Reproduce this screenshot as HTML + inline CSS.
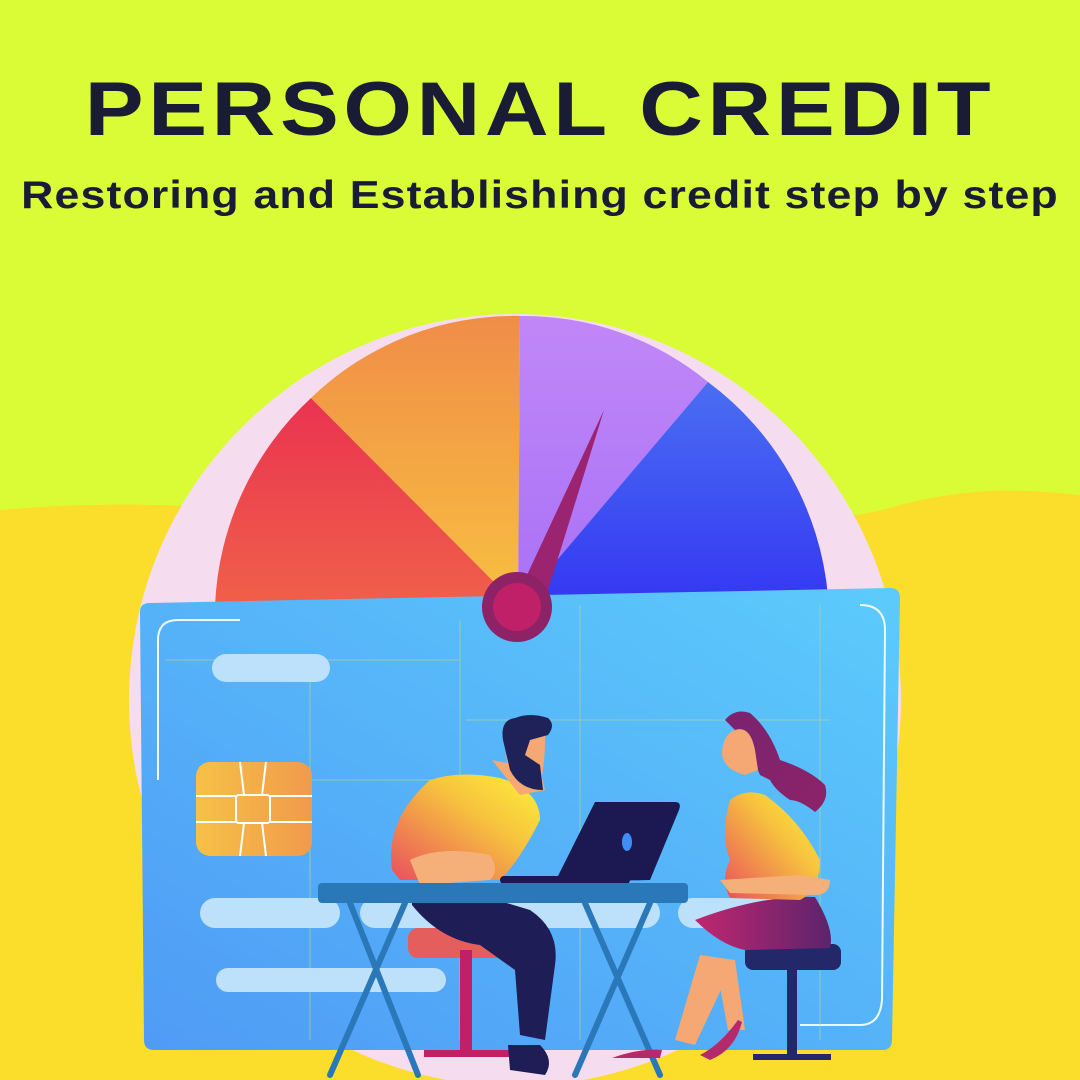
<!DOCTYPE html>
<html><head><meta charset="utf-8"><style>
html,body{margin:0;padding:0}
body{width:1080px;height:1080px;overflow:hidden;background:#dafc36;position:relative;font-family:"Liberation Sans",sans-serif}
.t{position:absolute;left:0;width:1080px;text-align:center;color:#1a1b34;font-weight:900;white-space:nowrap}
.t1{top:66px;font-size:76px;letter-spacing:4px;transform:scaleX(1.16)}
.t2{top:174px;font-size:39px;letter-spacing:1px;transform:scaleX(1.145)}
svg{position:absolute;left:0;top:0}
</style></head><body>
<svg width="1080" height="1080" viewBox="0 0 1080 1080">
<defs>
<linearGradient id="red" x1="0" y1="0" x2="0" y2="1"><stop offset="0" stop-color="#ea3350"/><stop offset="1" stop-color="#f0604a"/></linearGradient>
<linearGradient id="or" x1="0" y1="0" x2="0" y2="1"><stop offset="0" stop-color="#f08d48"/><stop offset="1" stop-color="#f8c040"/></linearGradient>
<linearGradient id="pu" x1="0" y1="0" x2="0" y2="1"><stop offset="0" stop-color="#c187f8"/><stop offset="1" stop-color="#a871f6"/></linearGradient>
<linearGradient id="bl" x1="0" y1="0" x2="0" y2="1"><stop offset="0" stop-color="#4a6ef2"/><stop offset="1" stop-color="#3437f2"/></linearGradient>
<linearGradient id="card" x1="0" y1="1" x2="1" y2="0"><stop offset="0" stop-color="#4f9bf6"/><stop offset="1" stop-color="#5ccbfb"/></linearGradient>
<linearGradient id="shirt" x1="0" y1="1" x2="1" y2="0"><stop offset="0" stop-color="#e9505e"/><stop offset="0.6" stop-color="#f7c23e"/><stop offset="1" stop-color="#fdf23a"/></linearGradient>
<linearGradient id="hair" x1="0" y1="0" x2="1" y2="1"><stop offset="0" stop-color="#7a2370"/><stop offset="1" stop-color="#8c2368"/></linearGradient>
<linearGradient id="skirt" x1="0" y1="0" x2="1" y2="0"><stop offset="0" stop-color="#c02670"/><stop offset="1" stop-color="#5c246b"/></linearGradient>
<linearGradient id="chip" x1="0" y1="0" x2="1" y2="0"><stop offset="0" stop-color="#f6c146"/><stop offset="1" stop-color="#f19a4c"/></linearGradient>
</defs>
<path d="M0 510 C120 500 200 505 300 515 C420 525 500 500 620 505 C720 510 800 535 900 505 C980 485 1030 490 1080 495 L1080 1080 L0 1080 Z" fill="#fbdd2c"/>
<circle cx="515" cy="700" r="386" fill="#f6dcef"/>
<path d="M518 606 L215 606 A300 300 0 0 1 311 398 Z" fill="url(#red)"/>
<path d="M518 606 L311 398 A292 292 0 0 1 520 316 Z" fill="url(#or)"/>
<path d="M518 606 L520 316 A290 290 0 0 1 708 382 Z" fill="url(#pu)"/>
<path d="M518 606 L708 382 A300 300 0 0 1 828 596 Z" fill="url(#bl)"/>
<path d="M140 612 Q140 603 150 603 L890 588 Q900 588 900 598 L892 1040 Q892 1050 882 1050 L154 1050 Q144 1050 144 1040 Z" fill="url(#card)"/>
<path d="M158 780 L158 640 Q158 620 178 620 L240 620 M860 605 Q885 605 885 630 L882 1000 Q880 1025 860 1025 L800 1025" stroke="#fff" stroke-width="2" fill="none" opacity="0.9"/>
<g stroke="#b9d98a" stroke-width="1" opacity="0.6" fill="none"><path d="M165 660 H460 M460 620 V1040 M310 660 V1040 M580 605 V1040 M466 720 H830 M230 780 H460 M820 605 V1040"/></g>
<rect x="212" y="654" width="118" height="28" rx="14" fill="#bde0fb"/>
<rect x="200" y="898" width="140" height="30" rx="15" fill="#bde0fb"/>
<rect x="360" y="898" width="300" height="30" rx="15" fill="#bde0fb"/>
<rect x="678" y="898" width="120" height="30" rx="15" fill="#bde0fb"/>
<rect x="216" y="968" width="230" height="24" rx="12" fill="#bde0fb"/>
<rect x="196" y="762" width="116" height="94" rx="14" fill="url(#chip)"/>
<g stroke="#fff" stroke-width="2" fill="none"><path d="M196 796 H236 M270 796 H312 M196 822 H236 M270 822 H312 M240 762 L244 795 M266 762 L262 795 M240 856 L244 823 M266 856 L262 823"/><rect x="236" y="795" width="34" height="28" rx="3"/></g>
<path d="M520 590 L604 410 L545 600 Z" fill="#9b2470"/>
<circle cx="517" cy="607" r="35" fill="#8d2266"/><circle cx="517" cy="607" r="24" fill="#c02068"/>
<rect x="408" y="928" width="110" height="30" rx="10" fill="#e55e5e"/>
<rect x="460" y="950" width="12" height="105" fill="#c02068"/>
<rect x="424" y="1050" width="100" height="7" fill="#c02068"/>
<path d="M412 905 Q410 880 430 880 L530 910 Q560 930 555 965 L545 1040 L520 1035 L515 970 L480 945 Q440 940 412 905 Z" fill="#1e1d55"/>
<path d="M508 1045 L540 1045 Q555 1060 545 1075 L510 1070 Z" fill="#1e1d55"/>
<path d="M392 870 Q385 820 430 780 Q460 770 500 778 Q540 790 540 820 Q520 860 500 880 L400 880 Z" fill="url(#shirt)"/>
<path d="M492 760 L540 770 L545 790 L520 795 Z" fill="#f5a774"/>
<path d="M505 745 Q505 725 525 722 L545 726 Q546 760 540 786 Q520 785 508 770 Z" fill="#f5a774"/>
<path d="M503 740 Q500 720 515 718 Q530 712 548 718 Q556 725 548 735 L530 740 L525 755 L540 765 L543 790 Q520 790 510 770 Z" fill="#1f2259"/>
<path d="M410 860 Q440 845 490 855 Q500 870 490 880 L420 885 Z" fill="#f5b07a"/>
<path d="M595 802 L675 802 Q682 802 679 810 L650 880 L555 882 Z" fill="#1b1852"/>
<ellipse cx="627" cy="842" rx="5" ry="9" fill="#3f8ef5"/>
<rect x="500" y="876" width="130" height="8" rx="4" fill="#1b1852"/>
<rect x="318" y="883" width="370" height="20" rx="4" fill="#2a78b8"/>
<g stroke="#2a78b8" stroke-width="6" stroke-linecap="round"><path d="M405 903 L330 1075 M350 903 L418 1075 M585 903 L660 1075 M650 903 L575 1075"/></g>
<rect x="745" y="944" width="96" height="26" rx="8" fill="#23286b"/>
<rect x="787" y="968" width="10" height="88" fill="#23286b"/>
<rect x="753" y="1054" width="78" height="6" fill="#23286b"/>
<path d="M700 955 L675 1040 L695 1045 L735 960 Z" fill="#f5a774"/>
<path d="M735 960 L745 1030 L728 1030 L715 960 Z" fill="#f5a774"/>
<path d="M612 1058 Q640 1048 662 1050 L660 1058 Z M700 1055 Q720 1045 738 1020 L742 1022 Q735 1050 710 1060 Z" fill="#b52a6a"/>
<path d="M695 920 Q760 895 815 897 Q835 930 830 948 L745 950 Q720 945 695 920 Z" fill="url(#skirt)"/>
<path d="M730 800 Q745 788 765 795 Q800 820 820 860 Q820 890 800 900 L730 898 Q720 880 730 860 Q720 835 730 800 Z" fill="url(#shirt)"/>
<path d="M720 880 L800 875 L830 880 Q830 895 815 895 L730 893 Z" fill="#f5b07a"/>
<path d="M725 720 Q735 708 750 713 Q770 730 780 760 Q810 770 825 785 Q830 800 815 812 Q800 800 790 800 Q775 790 770 780 L760 775 L745 740 Z" fill="url(#hair)"/>
<path d="M735 730 Q750 725 755 750 L758 770 L745 775 Q725 770 722 755 Q722 735 735 730 Z" fill="#f5a774"/>
</svg>
<div class="t t1">PERSONAL CREDIT</div>
<div class="t t2">Restoring and Establishing credit step by step</div>
</body></html>
